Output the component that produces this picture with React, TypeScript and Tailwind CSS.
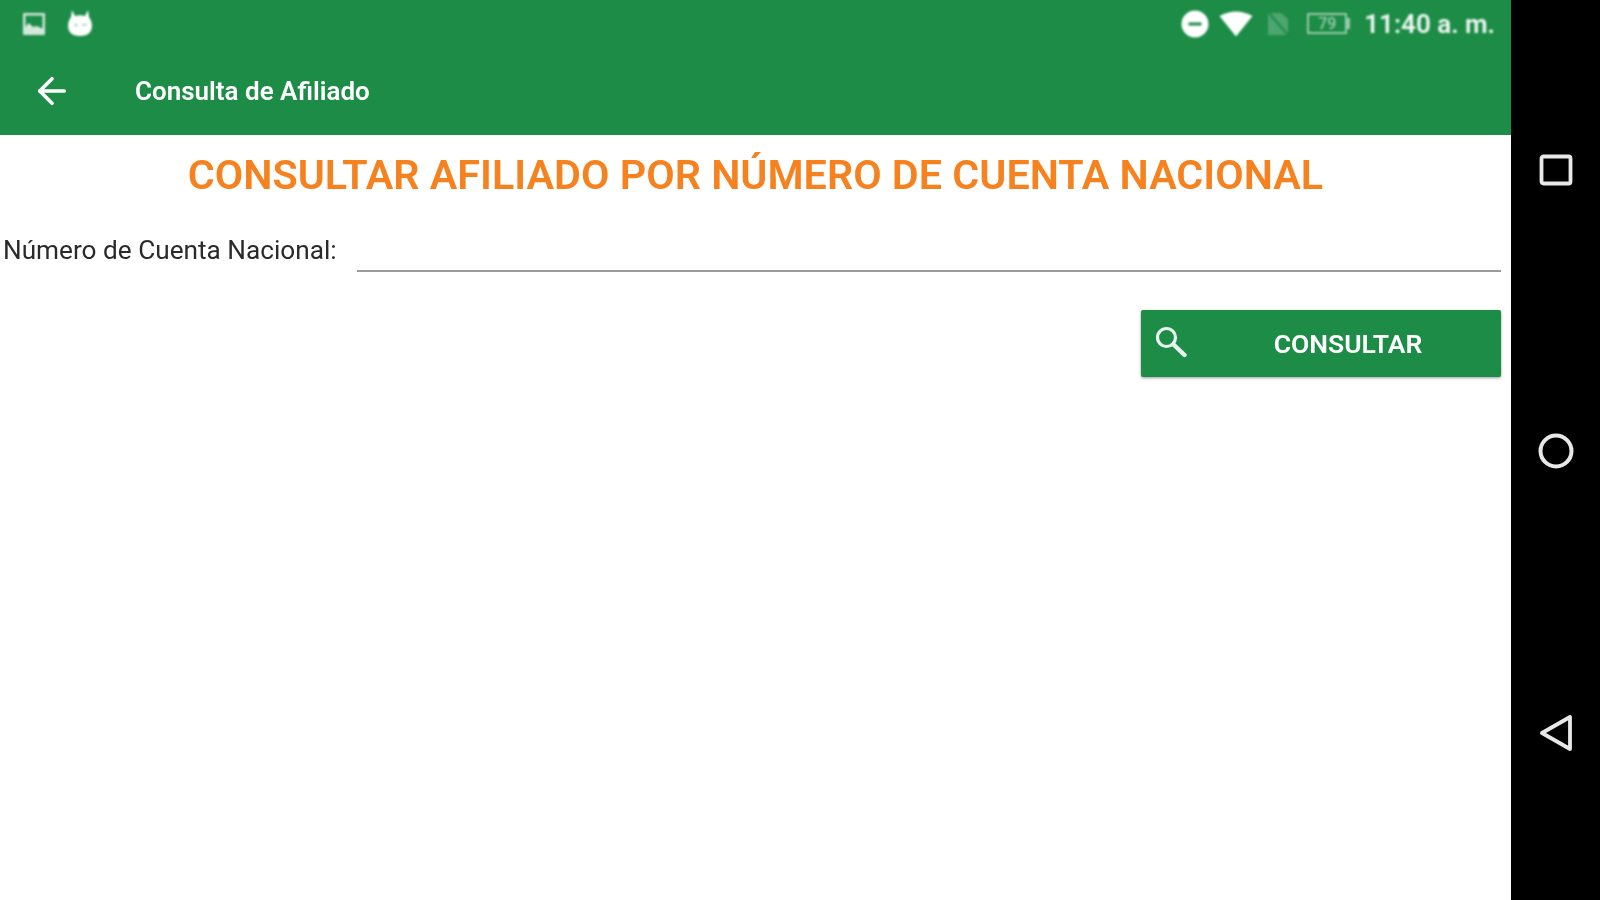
import React from 'react';
import { ArrowLeft } from 'lucide-react';

// --- Iconos de la barra de estado ---
const ImageIcon = () => (
  <svg width="24" height="24" viewBox="0 0 24 24" className="opacity-80">
    <rect x="1" y="1" width="22" height="22" rx="1" fill="#fff" />
    <rect x="3.5" y="3.5" width="17" height="13" fill="#1c8c47" />
    <path d="M3 15 L7 11 L11 15 L15 14 L21 17 L21 21 L3 21 Z" fill="#fff" />
  </svg>
);

const CatIcon = () => (
  <svg width="26" height="28" viewBox="0 0 26 28">
    <path d="M5 1 L8 7 Q13 5.5 18 7 L21 1 L22 8 Q25 12 25 18 Q24 27 13 27 Q2 27 1 18 Q1 12 4 8 Z" fill="#fff" />
    <circle cx="9" cy="16" r="1.5" fill="#9fd0b0" />
    <rect x="15" y="15" width="5" height="1.5" fill="#9fd0b0" />
  </svg>
);

const DndIcon = () => (
  <svg width="28" height="28" viewBox="0 0 28 28">
    <circle cx="14" cy="14" r="13.5" fill="#fff" />
    <rect x="7.5" y="12.5" width="13" height="3" fill="#1c8c47" />
  </svg>
);

const WifiIcon = () => (
  <svg width="34" height="26" viewBox="0 0 34 26">
    <path d="M0.5 5 Q17 -4 33.5 5 L17 25.5 Z" fill="#fff" />
  </svg>
);

const SimIcon = () => (
  <svg width="22" height="24" viewBox="0 0 22 24">
    <path d="M1 1 L14 1 L21 7 L21 23 L1 23 Z" fill="#fff" opacity="0.22" />
    <path d="M2 1 L21 23" stroke="#1c8c47" strokeWidth="2" />
  </svg>
);

const BatteryIcon = () => (
  <div className="flex items-center opacity-55">
    <div className="w-[40px] h-[21px] border-2 border-white flex items-center justify-center text-[16px] font-medium leading-none text-white">
      79
    </div>
    <div className="w-[3px] h-[11px] bg-white" />
  </div>
);

const SearchGlyph = () => (
  <svg width="34" height="34" viewBox="0 0 34 34" fill="none" stroke="#fff" className="opacity-90">
    <circle cx="12.5" cy="12.5" r="9" strokeWidth="3.2" />
    <path d="M19.5 19.5 L30.5 30" strokeWidth="4.4" strokeLinecap="round" />
  </svg>
);

// --- Botones de navegación ---
const NavBar = () => (
  <div className="w-[89px] bg-black flex flex-col items-center pt-[154px] text-white">
    <svg className="blur-[0.7px]" width="34" height="32" viewBox="0 0 34 32" fill="none" stroke="#e8e8e8" strokeWidth="3.8">
      <rect x="2.5" y="2.5" width="29" height="27" rx="2" />
    </svg>
    <svg className="mt-[246px] blur-[0.7px]" width="38" height="38" viewBox="0 0 38 38" fill="none" stroke="#e8e8e8" strokeWidth="4">
      <circle cx="19" cy="19" r="15.5" />
    </svg>
    <svg className="mt-[244px] blur-[0.7px]" width="34" height="38" viewBox="0 0 34 38" fill="none" stroke="#e8e8e8" strokeWidth="3.8" strokeLinejoin="round">
      <path d="M3 19 L31 3 L31 35 Z" />
    </svg>
  </div>
);

export default function App() {
  return (
    <div className="w-[1600px] h-[900px] flex overflow-hidden bg-white font-['Roboto',sans-serif]">
      <div className="w-[1511px] flex flex-col">
        <header className="h-[135px] bg-[#1c8c47] text-white shrink-0">
          <div className="h-[47px] flex items-center pl-[22px] pr-[16px] blur-[0.8px]">
            <ImageIcon />
            <div className="ml-[21px] -mt-[2px]">
              <CatIcon />
            </div>
            <div className="ml-auto flex items-center">
              <DndIcon />
              <div className="ml-[10px]">
                <WifiIcon />
              </div>
              <div className="ml-[14px]">
                <SimIcon />
              </div>
              <div className="ml-[18px]">
                <BatteryIcon />
              </div>
              <span className="ml-[14px] mt-[2px] text-[26px] font-semibold text-[#f2f8f4]">11:40 a. m.</span>
            </div>
          </div>
          <div className="h-[88px] flex items-center pl-[31px] blur-[0.7px]">
            <ArrowLeft size={42} strokeWidth={2.1} />
            <span className="ml-[62px] text-[26px] font-semibold">Consulta de Afiliado</span>
          </div>
        </header>

        <main className="flex-1 flex flex-col">
          <h1 className="mt-[16px] text-center text-[41.3px] font-semibold leading-[48px] text-[#f5821f] blur-[0.7px]">
            CONSULTAR AFILIADO POR NÚMERO DE CUENTA NACIONAL
          </h1>
          <div className="mt-[23px] flex items-start pl-[3px] pr-[10px]">
            <label className="mt-[3px] text-[26.2px] leading-[50px] text-[#2a2a2a] whitespace-nowrap blur-[0.7px]">
              Número de Cuenta Nacional:
            </label>
            <div className="ml-[20px] flex-1 h-[50px] border-b-2 border-[#9a9a9a]" />
          </div>
          <div className="mt-[35px] flex justify-end pr-[10px]">
            <button className="w-[360px] h-[67px] bg-[#1c8c47] rounded-[2px] shadow-[0_1px_3px_rgba(0,0,0,0.4)] flex items-center pl-[13px] text-white">
              <div className="-mt-[3px] blur-[0.7px]">
                <SearchGlyph />
              </div>
              <span className="flex-1 text-center pl-[7px] text-[26.5px] font-semibold blur-[0.7px]">CONSULTAR</span>
            </button>
          </div>
        </main>
      </div>
      <NavBar />
    </div>
  );
}
